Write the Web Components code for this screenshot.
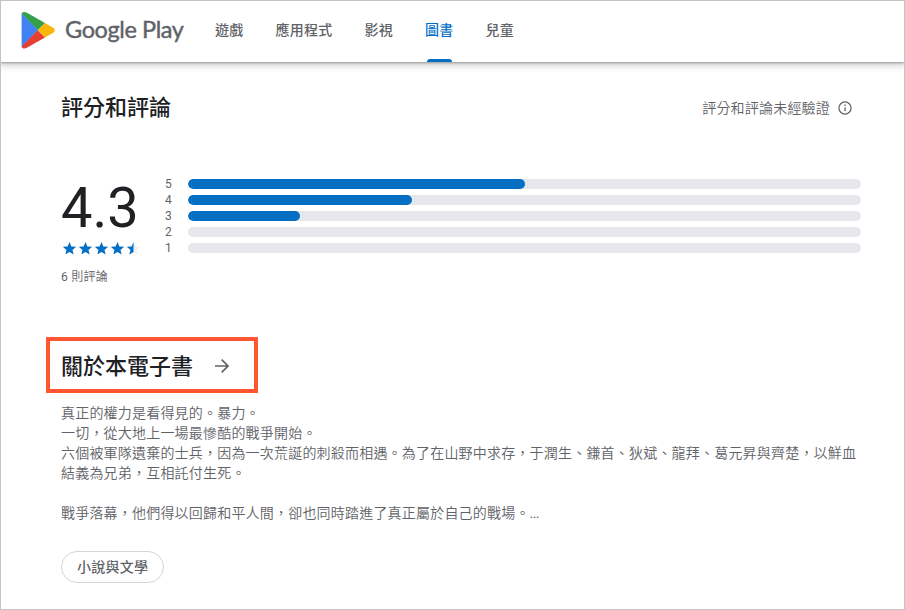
<!DOCTYPE html>
<html lang="zh-Hant">
<head>
<meta charset="utf-8">
<title>Google Play</title>
<style>
html,body{margin:0;height:100%;background:#fff}
body{font-family:Roboto,"Noto Sans CJK TC",sans-serif;overflow:hidden}
</style>
</head>
<body>
<play-page>
  <play-header slot="header">
    <nav-tab>遊戲</nav-tab><nav-tab>應用程式</nav-tab><nav-tab>影視</nav-tab><nav-tab active>圖書</nav-tab><nav-tab>兒童</nav-tab>
  </play-header>
  <section-heading class="ratings">評分和評論<info-note slot="end">評分和評論未經驗證</info-note></section-heading>
  <rating-summary score="4.3"><span>6</span> 則評論
    <rating-bar slot="bars" value="50.1">5</rating-bar>
    <rating-bar slot="bars" value="33.3">4</rating-bar>
    <rating-bar slot="bars" value="16.65">3</rating-bar>
    <rating-bar slot="bars" value="0">2</rating-bar>
    <rating-bar slot="bars" value="0">1</rating-bar>
  </rating-summary>
  <about-heading>關於本電子書</about-heading>
  <book-description>真正的權力是看得見的。暴力。<br>一切，從大地上一場最慘酷的戰爭開始。<br>六個被軍隊遺棄的士兵，因為一次荒誕的刺殺而相遇。為了在山野中求存，于潤生、鎌首、狄斌、龍拜、葛元昇與齊楚，以鮮血<br>結義為兄弟，互相託付生死。<br><br>戰爭落幕，他們得以回歸和平人間，卻也同時踏進了真正屬於自己的戰場。<span>...</span></book-description>
  <genre-chip>小說與文學</genre-chip>
</play-page>
<script>
const define = (name, html, setup) => customElements.define(name, class extends HTMLElement {
  connectedCallback() {
    if (this.shadowRoot) return;
    const t = document.createElement('template');
    t.innerHTML = html;
    this.attachShadow({mode: 'open'}).append(t.content.cloneNode(true));
    if (setup) setup(this, this.shadowRoot);
  }
});

define('play-page', `<style>
:host{display:flex;flex-direction:column;box-sizing:border-box;width:905px;height:610px;border:1px solid #c4c4c4;background:#fff}
main{display:flex;flex-direction:column;align-items:flex-start;padding:30px 43px 0 60px}
</style><slot name="header"></slot><main><slot></slot></main>`);

define('play-header', `<style>
:host{display:flex;height:61px;flex:none;background:#fff;box-shadow:0 1px 2px rgba(60,64,67,.42),0 2px 6px 2px rgba(60,64,67,.22);clip-path:inset(0 0 -12px 0)}
.brand{display:flex;align-items:center;width:198px;padding-left:20px;box-sizing:border-box}
svg{flex:none;width:34px;height:38px;margin-top:-3px}
.word{font:400 23.5px/32px Lato,sans-serif;letter-spacing:-.4px;color:#5f6368;-webkit-text-stroke:.45px #5f6368;margin:-6px 0 0 10px;white-space:nowrap}
nav{display:flex}
</style>
<div class="brand">
<svg viewBox="0 0 34 38"><path fill="#34a04a" d="M.7 3C.8 1.1 3 .2 5.5 1.6L24 12.1 16.7 19.3Z"/><path fill="#4081f3" d="M.6 2.5 17 19.3.6 36Z"/><path fill="#e63e31" d="M16.7 19.3 24 26.4 5.8 36.8C3.1 38.3.9 37.2.6 35.4Z"/><path fill="#fab50b" d="M24 12.1 31.8 16.5C34.3 18 34.3 20.7 31.8 22.1L24 26.4 16.7 19.3Z"/></svg>
<span class="word">Google Play</span></div><nav><slot></slot></nav>`);

define('nav-tab', `<style>
:host{display:flex;flex-direction:column;justify-content:space-between;box-sizing:border-box;padding:19px 16px 0;height:61px;font-size:14px;line-height:20px;font-weight:500;letter-spacing:.25px;color:#5f6368}
:host([active]){color:#056fcb}
i{display:none;height:3px;margin:0 2px 0 1.5px;border-radius:3px 3px 0 0;background:#056fc4}
:host([active]) i{display:block}
</style><span><slot></slot></span><i></i>`);

define('section-heading', `<style>
:host{display:flex;justify-content:space-between;align-items:center;width:100%;height:32px;font-size:22px;line-height:32px;font-weight:500;color:#202124}
</style><span><slot></slot></span><slot name="end"></slot>`);

define('info-note', `<style>
:host{display:flex;align-items:center;font-size:14px;line-height:20px;font-weight:350;letter-spacing:.2px;color:#5f6368;gap:8px;padding-right:9px}
svg{width:14px;height:14px}
</style><slot></slot><svg viewBox="0 0 14 14"><circle cx="7" cy="7" r="6.1" fill="none" stroke="#5f6368" stroke-width="1.25"/><path fill="#5f6368" d="M6.4 6.2h1.3v4H6.4zM6.4 3.6h1.3v1.3H6.4z"/></svg>`);

define('rating-summary', `<style>
:host{display:flex;width:100%;margin-top:52px;height:115px}
.score{width:104px;display:flex;flex-direction:column;font-size:12px;line-height:16px;color:#5f6368;letter-spacing:.3px}
b{font-weight:400;font-size:56px;line-height:64px;color:#202124;letter-spacing:0}
.stars{display:flex;gap:3px;margin:1.6px 0 0 1.5px;height:13px}
svg{width:13px;height:13px;flex:none;overflow:visible}
.reviews{margin-top:14.4px;white-space:nowrap;font-weight:350}
::slotted(span){font-weight:400}
.bars{display:flex;flex-direction:column;flex:1}
</style><div class="score"><b></b><div class="stars"></div><span class="reviews"><slot></slot></span></div><div class="bars"><slot name="bars"></slot></div>`,
(el, root) => {
  root.querySelector('b').textContent = el.getAttribute('score');
  const p = 'M6.5 0 8.4 4.4 13.2 4.7 9.5 7.9 10.7 12.6 6.5 10.1 2.3 12.6 3.5 7.9 -.2 4.7 4.6 4.4Z';
  root.querySelector('.stars').innerHTML = [0,1,2,3,4].map(i => '<svg viewBox="0 0 13 13">' +
    (i < 4 ? '<path fill="#056fc4" d="' + p + '"/>' :
    '<path fill="#eff0f2" d="' + p + '"/><path fill="#056fc4" d="M6.5 0V10.1L2.3 12.6 3.5 7.9-.2 4.7 4.6 4.4Z"/>') + '</svg>').join('');
});

define('rating-bar', `<style>
:host{display:flex;align-items:center;height:16px;font-size:12px;line-height:16px;color:#5f6368}
span{width:23px}
div{flex:1;height:10px;border-radius:5px;background:#e5e7eb;overflow:hidden}
i{display:block;height:10px;border-radius:5px;background:#056fc4}
</style><span><slot></slot></span><div><i></i></div>`,
(el, root) => { root.querySelector('i').style.width = el.getAttribute('value') + '%'; });

define('about-heading', `<style>
:host{display:flex;align-items:center;box-sizing:border-box;width:212px;height:56px;margin:46px 0 0 -15px;padding:2px 0 0 11px;border:4px solid #ff5533;font-size:22px;line-height:32px;font-weight:500;color:#202124}
span{margin-top:2px}
svg{width:16px;height:16px;margin-left:21px}
</style><span><slot></slot></span><svg viewBox="0 0 16 16" fill="none" stroke="#5f6368" stroke-width="1.7"><path d="M1 8H14M7.7 1.7 14 8 7.7 14.3"/></svg>`);

define('book-description', `<style>
:host{display:block;margin-top:10px;font-size:14px;line-height:20px;font-weight:350;letter-spacing:.2px;color:#5f6368;white-space:nowrap}
::slotted(span){letter-spacing:-.6px;font-weight:400}
</style><slot></slot>`);

define('genre-chip', `<style>
:host{display:flex;align-items:center;box-sizing:border-box;height:32px;margin-top:28px;padding:0 15px;border:1px solid #d3d5d9;border-radius:16px;font-size:14px;line-height:20px;font-weight:500;letter-spacing:.25px;color:#5f6368}
</style><slot></slot>`);
</script>
</body>
</html>
